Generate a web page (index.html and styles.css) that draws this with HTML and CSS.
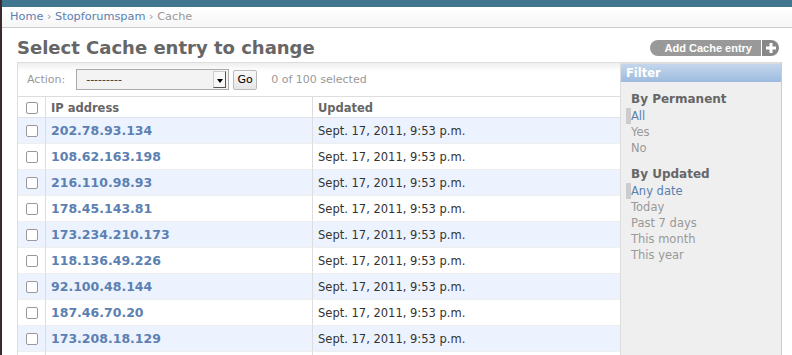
FILE: index.html
```html
<!DOCTYPE html>
<html lang="en">
<head>
  <meta charset="UTF-8">
  <title>Select Cache entry to change | Django site admin</title>
  <link rel="stylesheet" href="styles.css">
</head>
<body>

  <div class="header"></div>

  <div class="breadcrumbs">
    <a href="#">Home</a> &rsaquo; <a href="#">Stopforumspam</a> &rsaquo; Cache
  </div>

  <div class="content">
    <div class="title-row">
      <h1>Select Cache entry to change</h1>
      <a class="addlink" href="#">
        <span class="add-text">Add Cache entry</span>
        <span class="add-plus">
          <svg width="12" height="12" viewBox="0 0 12 12"><path d="M6 1v10M1 6h10" stroke="#fff" stroke-width="3"/></svg>
        </span>
      </a>
    </div>

    <div class="changelist">
      <div class="results">
        <div class="actions">
          <label>Action:</label>
          <div class="select">
            <span class="select-value">---------</span>
            <span class="select-arrow"><span class="tri"></span></span>
          </div>
          <button class="go">Go</button>
          <span class="counter">0 of 100 selected</span>
        </div>

        <table>
          <thead>
            <tr>
              <th class="col-check"><span class="box"></span></th>
              <th class="col-ip">IP address</th>
              <th class="col-date">Updated</th>
            </tr>
          </thead>
          <tbody>
            <tr class="row1"><td class="col-check"><span class="box"></span></td><td class="col-ip"><a href="#">202.78.93.134</a></td><td class="col-date">Sept. 17, 2011, 9:53 p.m.</td></tr>
            <tr class="row2"><td class="col-check"><span class="box"></span></td><td class="col-ip"><a href="#">108.62.163.198</a></td><td class="col-date">Sept. 17, 2011, 9:53 p.m.</td></tr>
            <tr class="row1"><td class="col-check"><span class="box"></span></td><td class="col-ip"><a href="#">216.110.98.93</a></td><td class="col-date">Sept. 17, 2011, 9:53 p.m.</td></tr>
            <tr class="row2"><td class="col-check"><span class="box"></span></td><td class="col-ip"><a href="#">178.45.143.81</a></td><td class="col-date">Sept. 17, 2011, 9:53 p.m.</td></tr>
            <tr class="row1"><td class="col-check"><span class="box"></span></td><td class="col-ip"><a href="#">173.234.210.173</a></td><td class="col-date">Sept. 17, 2011, 9:53 p.m.</td></tr>
            <tr class="row2"><td class="col-check"><span class="box"></span></td><td class="col-ip"><a href="#">118.136.49.226</a></td><td class="col-date">Sept. 17, 2011, 9:53 p.m.</td></tr>
            <tr class="row1"><td class="col-check"><span class="box"></span></td><td class="col-ip"><a href="#">92.100.48.144</a></td><td class="col-date">Sept. 17, 2011, 9:53 p.m.</td></tr>
            <tr class="row2"><td class="col-check"><span class="box"></span></td><td class="col-ip"><a href="#">187.46.70.20</a></td><td class="col-date">Sept. 17, 2011, 9:53 p.m.</td></tr>
            <tr class="row1"><td class="col-check"><span class="box"></span></td><td class="col-ip"><a href="#">173.208.18.129</a></td><td class="col-date">Sept. 17, 2011, 9:53 p.m.</td></tr>
            <tr class="row2"><td class="col-check"></td><td class="col-ip"></td><td class="col-date"></td></tr>
          </tbody>
        </table>
      </div>

      <div class="filter">
        <h2>Filter</h2>
        <h3>By Permanent</h3>
        <ul>
          <li class="selected"><a href="#">All</a></li>
          <li><a href="#">Yes</a></li>
          <li><a href="#">No</a></li>
        </ul>
        <h3>By Updated</h3>
        <ul>
          <li class="selected"><a href="#">Any date</a></li>
          <li><a href="#">Today</a></li>
          <li><a href="#">Past 7 days</a></li>
          <li><a href="#">This month</a></li>
          <li><a href="#">This year</a></li>
        </ul>
      </div>
    </div>
  </div>

</body>
</html>
```

FILE: styles.css
```css
html, body {
  height: 100%;
  overflow: hidden;
}

body {
  margin: 0;
  border-left: 2px solid #3a2a2e;
  font-family: 'DejaVu Sans', sans-serif;
  font-size: 11px;
  color: #333;
  background: #fff;
}

a {
  text-decoration: none;
  color: #5b80b2;
}

.header {
  height: 7px;
  background: #417690;
}

.breadcrumbs {
  height: 20px;
  line-height: 20px;
  padding-left: 8px;
  color: #999;
  font-size: 11.3px;
  background: linear-gradient(#fff, #f6f6f6);
  border-bottom: 1px solid #ccc;
}

.content {
  padding: 0 10px 0 15px;
}

.title-row {
  display: flex;
  justify-content: space-between;
  align-items: center;
  margin: 9px 0 3px;
}

h1 {
  margin: 0;
  font-size: 18px;
  line-height: 22px;
  color: #666;
}

.addlink {
  display: flex;
  height: 16px;
  margin-right: 3px;
  font-family: 'Liberation Sans', Arial, sans-serif;
  font-size: 11px;
  font-weight: bold;
  color: #fff;
}

.add-text {
  line-height: 16px;
  padding: 0 9px 0 15px;
  background: #999;
  border-radius: 8px 0 0 8px;
}

.add-plus {
  display: flex;
  align-items: center;
  justify-content: center;
  width: 17px;
  margin-left: 1px;
  background: #888;
  border-radius: 0 8px 8px 0;
}

.changelist {
  display: flex;
  border-top: 1px solid #ddd;
  border-left: 1px solid #ddd;
  border-right: 1px solid #ccc;
  height: 300px;
}

.results {
  flex: 1;
}

.actions {
  display: flex;
  align-items: center;
  height: 33px;
  padding-left: 9px;
  border-bottom: 1px solid #ddd;
  background: linear-gradient(#eee, #fff 25%, #fff);
  color: #999;
}

.actions label {
  margin-right: 11px;
}

.select {
  display: flex;
  align-items: center;
  box-sizing: border-box;
  width: 153px;
  height: 21px;
  border: 1px solid #aaa;
  background: #f3f3f3;
  color: #333;
}

.select-value {
  flex: 1;
  padding-left: 9px;
}

.select-arrow {
  display: flex;
  align-items: center;
  justify-content: center;
  box-sizing: border-box;
  width: 13px;
  height: 17px;
  margin-right: 2px;
  background: #f8f8f8;
  border: 1px solid #ccc;
  border-right-color: #555;
  border-bottom-color: #555;
}

.tri {
  width: 0;
  height: 0;
  border-left: 3px solid transparent;
  border-right: 3px solid transparent;
  border-top: 4px solid #000;
  margin-top: 3px;
}

.go {
  margin-left: 4px;
  width: 24px;
  height: 20px;
  padding: 0;
  border: 1px solid #bbb;
  border-radius: 2px;
  background: linear-gradient(#fafafa, #e6e6e6);
  font-family: 'DejaVu Sans', sans-serif;
  font-size: 11px;
  color: #000;
}

.counter {
  margin-left: 14px;
}

table {
  width: 100%;
  border-collapse: separate;
  border-spacing: 0;
  table-layout: fixed;
}

th, td {
  box-sizing: border-box;
  padding: 0 0 0 5px;
  text-align: left;
  white-space: nowrap;
  border-bottom: 1px solid #eee;
}

thead th {
  height: 21px;
  padding-top: 2px;
  font-size: 11.5px;
  font-weight: bold;
  color: #666;
  border-bottom: 1px solid #dde4ee;
}

td {
  height: 26px;
  font-size: 11.5px;
}

.col-check {
  width: 27px;
  padding-left: 8px;
}

.col-ip {
  width: 267px;
  border-left: 1px solid #ddd;
}

.col-date {
  border-left: 1px solid #ddd;
}

.col-ip a {
  font-size: 12.5px;
  font-weight: bold;
}

.box {
  display: block;
  box-sizing: border-box;
  width: 12px;
  height: 12px;
  border: 1px solid #999;
  border-radius: 2px;
  background: #fff;
}

.row1 td {
  background: #edf3fe;
}

.row2 td {
  background: #fff;
}

.filter {
  width: 160px;
  border-left: 1px solid #ddd;
  background: #efefef;
}

.filter h2 {
  margin: 0;
  height: 18px;
  line-height: 18px;
  padding-left: 5px;
  font-size: 11.5px;
  color: #fff;
  border-top: 1px solid #ddd;
  background: linear-gradient(#c4d6ec, #9dbbdf);
}

.filter h3 {
  margin: 9px 0 0;
  padding-left: 10px;
  font-size: 12px;
  line-height: 17px;
  color: #666;
}

.filter h3 + ul {
  margin-bottom: 10px;
}

.filter ul {
  list-style: none;
  margin: 0;
  padding-left: 10px;
  font-size: 11.5px;
}

.filter li {
  line-height: 16px;
}

.filter li a {
  color: #999;
}

.filter li.selected {
  margin-left: -5px;
  border-left: 5px solid #ccc;
}

.filter li.selected a {
  color: #5b80b2;
}
```
